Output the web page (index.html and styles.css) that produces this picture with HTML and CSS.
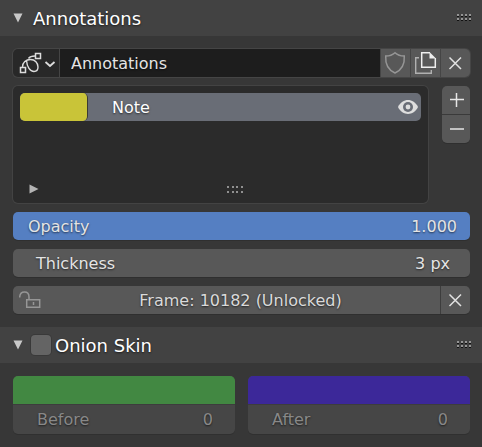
FILE: index.html
```html
<!DOCTYPE html>
<html lang="en">
<head>
<meta charset="utf-8">
<meta name="viewport" content="width=device-width, initial-scale=1">
<title>Annotations</title>
<link rel="stylesheet" href="styles.css">
</head>
<body>
<main class="sidebar">
  <section class="panel">
    <header class="panel-head">
      <button class="disclosure" type="button" aria-label="Collapse Annotations" aria-expanded="true">
        <svg width="10" height="10" viewBox="0 0 10 10"><path d="M0.5 0.5h9L5 9.5z" fill="#c8c8c8"/></svg>
      </button>
      <h2 class="panel-title">Annotations</h2>
      <svg class="grip" width="14" height="8" viewBox="0 0 14 8" aria-hidden="true"><path d="M0 2.500h2M4 2.500h2M8 2.500h2M12 2.500h2M0 6.500h2M4 6.500h2M8 6.500h2M12 6.500h2" stroke="#111"/><path d="M0 1h2M4 1h2M8 1h2M12 1h2M0 5h2M4 5h2M8 5h2M12 5h2" stroke="#959595" stroke-width="2"/></svg>
    </header>
    <div class="panel-body">
      <div class="joined">
        <button class="picker" type="button" aria-label="Browse annotation data">
          <svg width="46" height="28" viewBox="0 0 46 28" fill="none" stroke="#dcdcdc">
            <path d="M7.500 18.500h5v5h-5zM22.500 4.500h5v5h-5z" stroke-width="1.500"/>
            <path d="M22 7C18.500 7 16.500 8 15.500 9.500M9.500 18C9.500 13.500 13 10.500 17.500 10.500c4.500 0 7.500 3.500 7.500 7.500 0 3-1.500 4.500-4 4.500-4 0-7-4.500-7.500-11" stroke-width="1.400"/>
            <path d="M32.500 13l4.500 4 4.500-4" stroke-width="1.800"/>
          </svg>
        </button>
        <input class="name-field" type="text" value="Annotations" aria-label="Annotation name">
        <button class="tool" type="button" aria-label="Fake user">
          <svg width="28" height="28" viewBox="0 0 28 28" fill="none" stroke="#969696" stroke-width="1.500"><path d="M14 3.700C11.500 6 8 7 4.700 7c-.5 8 1.500 13.500 9.300 17C21.800 20.500 23.800 15 23.300 7 20 7 16.500 6 14 3.700z"/></svg>
        </button>
        <button class="tool" type="button" aria-label="Duplicate">
          <svg width="28" height="28" viewBox="0 0 28 28" fill="none"><path d="M8 8.700H4.700v15.600h15.600V21" stroke="#b0b0b0" stroke-width="1.400"/><path d="M19 3.700h-8.300v14.600h13.600V9" stroke="#eee" stroke-width="1.500"/><path d="M18.500 3L25 9.500h-6.500z" fill="#eee"/></svg>
        </button>
        <button class="tool" type="button" aria-label="Unlink">
          <svg width="28" height="28" viewBox="0 0 28 28"><path d="M8.500 8.500l11.500 11.500M20 8.500L8.500 20" stroke="#e2e2e2" stroke-width="1.500"/></svg>
        </button>
      </div>

      <div class="layers">
        <div class="layer-box">
          <div class="layer">
            <input class="swatch layer-color" type="color" value="#c9c438" aria-label="Layer color">
            <span class="layer-name">Note</span>
            <button class="eye" type="button" aria-label="Toggle visibility">
              <svg width="20" height="14" viewBox="0 0 20 14"><path d="M0 7C4.500-2.300 15.500-2.300 20 7 15.500 16.300 4.500 16.300 0 7z" fill="#dedede"/><circle cx="10" cy="7" r="5" fill="#696d76"/><circle cx="10" cy="7" r="2.400" fill="#dedede"/></svg>
            </button>
          </div>
          <div class="layer-foot">
            <button class="disclosure" type="button" aria-label="Show filter">
              <svg width="10" height="10" viewBox="0 0 10 10"><path d="M.5.5L9.500 5l-9 4.500z" fill="#b4b4b4"/></svg>
            </button>
            <svg class="list-grip" width="16" height="8" viewBox="0 0 16 8" aria-hidden="true"><path d="M0 2h2M5 2h2M9 2h2M14 2h2M0 7h2M5 7h2M9 7h2M14 7h2" stroke="#909090" stroke-width="2"/></svg>
          </div>
        </div>
        <div class="stack">
          <button class="tool" type="button" aria-label="Add layer">
            <svg width="28" height="28" viewBox="0 0 28 28"><path d="M8 13.500h14M14.500 7v14" stroke="#e6e6e6" stroke-width="1.500"/></svg>
          </button>
          <button class="tool" type="button" aria-label="Remove layer">
            <svg width="28" height="28" viewBox="0 0 28 28"><path d="M8 14h14" stroke="#e6e6e6" stroke-width="1.500"/></svg>
          </button>
        </div>
      </div>

      <div class="field slider">
        <label for="opacity">Opacity</label>
        <input id="opacity" type="text" inputmode="decimal" value="1.000">
      </div>
      <div class="field">
        <label for="thickness">Thickness</label>
        <input id="thickness" type="text" value="3 px">
      </div>
      <div class="joined">
        <button class="frame" type="button">
          <svg class="lock" width="22" height="18" viewBox="0 0 22 18" fill="none" stroke="#969696" stroke-width="1.500"><path d="M.7 6.500C.7 3 2.500 1 5.500 1s4.500 2 4.500 5v2M7.700 8.700h13v7.600h-13zM14.500 11v3"/></svg>
          <span>Frame: 10182 (Unlocked)</span>
        </button>
        <button class="tool" type="button" aria-label="Delete frame">
          <svg width="28" height="28" viewBox="0 0 28 28"><path d="M8.500 8.500l11.500 11.500M20 8.500L8.500 20" stroke="#e2e2e2" stroke-width="1.500"/></svg>
        </button>
      </div>
    </div>
  </section>

  <section class="panel">
    <header class="panel-head">
      <button class="disclosure" type="button" aria-label="Collapse Onion Skin" aria-expanded="true">
        <svg width="10" height="10" viewBox="0 0 10 10"><path d="M0.5 0.5h9L5 9.5z" fill="#c8c8c8"/></svg>
      </button>
      <input class="check" type="checkbox" id="onion">
      <h2 class="panel-title check-title"><label for="onion">Onion Skin</label></h2>
      <svg class="grip" width="14" height="8" viewBox="0 0 14 8" aria-hidden="true"><path d="M0 2.500h2M4 2.500h2M8 2.500h2M12 2.500h2M0 6.500h2M4 6.500h2M8 6.500h2M12 6.500h2" stroke="#111"/><path d="M0 1h2M4 1h2M8 1h2M12 1h2M0 5h2M4 5h2M8 5h2M12 5h2" stroke="#959595" stroke-width="2"/></svg>
    </header>
    <div class="panel-body ghosts">
      <div class="ghost">
        <input class="swatch ghost-color" type="color" value="#428842" aria-label="Before color">
        <div class="ghost-value">
          <label for="before">Before</label>
          <input id="before" type="text" inputmode="numeric" value="0">
        </div>
      </div>
      <div class="ghost">
        <input class="swatch ghost-color" type="color" value="#3c2899" aria-label="After color">
        <div class="ghost-value">
          <label for="after">After</label>
          <input id="after" type="text" inputmode="numeric" value="0">
        </div>
      </div>
    </div>
  </section>
</main>
</body>
</html>
```
FILE: styles.css
```css
* {
  box-sizing: border-box;
}

body {
  margin: 0;
  background: #373737;
  color: #e4e4e4;
  font: 16px/28px "DejaVu Sans", sans-serif;
  text-shadow: 0 1px 2px rgba(0, 0, 0, 0.6);
}

button,
input {
  margin: 0;
  padding: 0;
  border: 0;
  background: none;
  color: inherit;
  font: inherit;
  text-shadow: inherit;
}

svg {
  display: block;
  flex: none;
}

.panel-head {
  display: flex;
  align-items: center;
  height: 36px;
  padding: 0 11px 0 13px;
  background: #424242;
}

.disclosure {
  flex: none;
}

.panel-title {
  margin: 0 0 0 10px;
  padding-top: 2px;
  color: #fff;
  font-size: 18px;
  font-weight: 400;
}

.grip {
  margin-left: auto;
}

.panel-body {
  display: flex;
  flex-direction: column;
  gap: 9px;
  padding: 13px 12px 13px 13px;
}

.joined {
  display: flex;
  gap: 1px;
  height: 28px;
  border-radius: 5px;
  overflow: hidden;
  background: #3d3d3d;
  box-shadow: 0 1px 0 #2f2f2f;
}

.picker {
  width: 46px;
  background: #282828;
}

.joined:has(.picker) {
  background: #454545;
  box-shadow: 0 0 0 1px #454545;
}

.name-field {
  flex: 1;
  min-width: 0;
  padding: 2px 11px 0;
  background: #1d1d1d;
}

.tool {
  width: 29px;
  height: 28px;
  flex: none;
  background: #585858;
}

.layers {
  display: flex;
  gap: 14px;
}

.layer-box {
  display: flex;
  flex: 1;
  flex-direction: column;
  justify-content: space-between;
  height: 117px;
  padding: 7px;
  border-radius: 5px;
  background: #2b2b2b;
  box-shadow: 0 0 0 1px #434343;
}

.layer {
  display: flex;
  align-items: center;
  height: 28px;
  border-radius: 5px;
  background: #696d76;
}

.swatch {
  display: block;
  appearance: none;
  overflow: hidden;
}

.swatch::-webkit-color-swatch-wrapper {
  padding: 0;
}

.swatch::-webkit-color-swatch {
  border: 0;
  border-radius: 0;
}

.layer-color {
  width: 68px;
  height: 28px;
  border-right: 1px solid #3a3a32;
  border-radius: 5px;
}

.layer-name {
  flex: 1;
  padding: 2px 0 0 24px;
  color: #fff;
}

.eye {
  margin-right: 3px;
}

.layer-foot {
  display: grid;
  grid-template-columns: 1fr auto 1fr;
  align-items: center;
  padding: 0 0 2px 9px;
}

.layer-foot .disclosure {
  justify-self: start;
}

.list-grip {
  margin-left: 20px;
}

.stack {
  display: flex;
  flex-direction: column;
  align-self: flex-start;
  gap: 1px;
  border-radius: 5px;
  overflow: hidden;
  background: #3a3a3a;
  box-shadow: 0 1px 0 #2f2f2f;
}

.stack .tool {
  width: 28px;
}

.field {
  display: flex;
  justify-content: space-between;
  height: 28px;
  padding: 1px 20px 0 23px;
  border-radius: 5px;
  background: #585858;
  box-shadow: 0 1px 0 #2f2f2f;
}

.slider {
  padding: 1px 13px 0 15px;
  background: #557fc2;
}

.field input,
.ghost-value input {
  flex: 1;
  min-width: 0;
  height: 28px;
  text-align: right;
}

.frame {
  display: flex;
  flex: 1;
  align-items: center;
  padding: 0 0 0 6px;
  background: #585858;
  color: #dadada;
}

.frame span {
  flex: 1;
  padding-top: 2px;
}

.check {
  width: 20px;
  height: 20px;
  margin-left: 8px;
  appearance: none;
  border-radius: 4px;
  background: #646464;
  box-shadow: 0 0 0 1px #393939;
}

.check:checked {
  background: #557fc2;
}

.check-title {
  margin-left: 4px;
}

.ghosts {
  flex-direction: row;
  gap: 13px;
}

.ghost {
  flex: 1;
  border-radius: 5px;
  overflow: hidden;
  background: #464646;
  box-shadow: 0 1px 0 #303030;
}

.ghost-color {
  width: 100%;
  height: 28px;
}

.ghost-value {
  display: flex;
  height: 30px;
  padding: 1px 22px 0 24px;
  border-top: 1px solid #3d3d3d;
  color: #888;
}
```
